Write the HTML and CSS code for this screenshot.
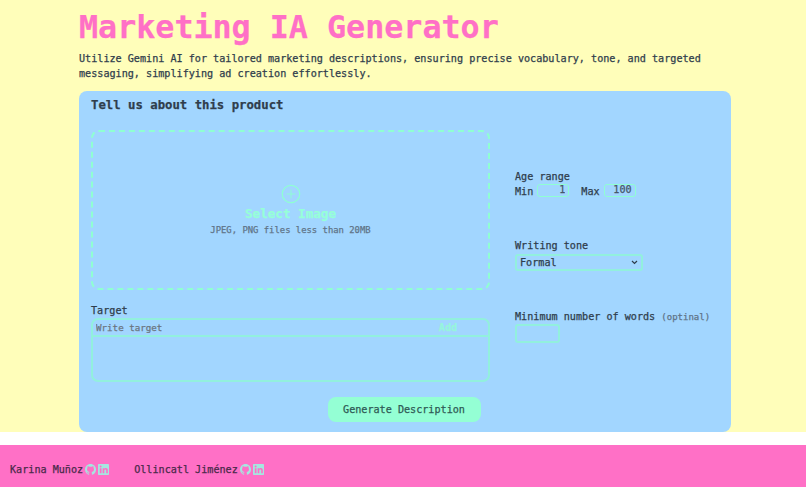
FILE: index.html

```html
<!DOCTYPE html>
<html lang="en">
<head>
  <meta charset="UTF-8" />
  <meta name="viewport" content="width=device-width, initial-scale=1.0"/>
  <title>Marketing IA Generator</title>
  <link rel="stylesheet" href="styles.css">
</head>
<body>

<main class="page">
  <h1 class="title">Marketing IA Generator</h1>
  <p class="intro">Utilize Gemini AI for tailored marketing descriptions, ensuring precise vocabulary, tone, and targeted messaging, simplifying ad creation effortlessly.</p>

  <form class="card">
    <h2 class="card-title">Tell us about this product</h2>

    <div class="columns">
      <div class="col-left">
        <div class="dropzone">
          <svg class="plus-icon" viewBox="0 0 20 20" width="20" height="20" fill="none" stroke="currentColor">
            <circle cx="10" cy="10" r="8.7" stroke-width="1.2"/>
            <path d="M10 5.5v9M5.5 10h9" stroke-width="0.9"/>
          </svg>
          <span class="drop-title">Select Image</span>
          <span class="drop-hint">JPEG, PNG files less than 20MB</span>
        </div>

        <div class="target">
          <label class="field-label" for="target">Target</label>
          <div class="target-box">
            <div class="target-row">
              <input class="target-input" type="text" id="target" placeholder="Write target" />
              <button class="add-btn" type="button">Add</button>
            </div>
            <div class="target-list"></div>
          </div>
        </div>
      </div>

      <div class="col-right">
        <div class="field age-field">
          <span class="field-label">Age range</span>
          <div class="age-row">
            <label for="ageMin">Min</label>
            <input class="age-input" type="text" id="ageMin" value="1" />
            <label class="max-label" for="ageMax">Max</label>
            <input class="age-input" type="text" id="ageMax" value="100" />
          </div>
        </div>

        <div class="field tone-field">
          <label class="field-label" for="tone">Writing tone</label>
          <select class="tone-select" id="tone">
            <option>Formal</option>
            <option>Casual</option>
          </select>
        </div>

        <div class="field words-field">
          <label class="field-label" for="words">Minimum number of words <span class="optional">(optinal)</span></label>
          <input class="words-input" type="text" id="words" />
        </div>
      </div>
    </div>

    <div class="actions">
      <button class="generate-btn" type="button">Generate Description</button>
    </div>
  </form>
</main>

<footer class="footer">
  <div class="person">
    <span class="person-name">Karina Muñoz</span>
    <svg class="icon" viewBox="0 0 16 16" width="11" height="11"><path fill="currentColor" d="M8 0C3.58 0 0 3.58 0 8c0 3.54 2.29 6.53 5.47 7.59.4.07.55-.17.55-.38 0-.19-.01-.82-.01-1.49-2.01.37-2.53-.49-2.69-.94-.09-.23-.48-.94-.82-1.13-.28-.15-.68-.52-.01-.53.63-.01 1.08.58 1.23.82.72 1.21 1.87.87 2.33.66.07-.52.28-.87.51-1.07-1.78-.2-3.64-.89-3.64-3.95 0-.87.31-1.59.82-2.15-.08-.2-.36-1.02.08-2.12 0 0 .67-.21 2.2.82.64-.18 1.32-.27 2-.27s1.36.09 2 .27c1.53-1.04 2.2-.82 2.2-.82.44 1.1.16 1.92.08 2.12.51.56.82 1.27.82 2.15 0 3.07-1.87 3.75-3.65 3.95.29.25.54.73.54 1.48 0 1.07-.01 1.93-.01 2.2 0 .21.15.46.55.38A8.01 8.01 0 0 0 16 8c0-4.42-3.58-8-8-8z"/></svg>
    <svg class="icon" viewBox="0 0 16 16" width="11" height="11"><path fill="currentColor" fill-rule="evenodd" d="M1 0h14a1 1 0 0 1 1 1v14a1 1 0 0 1-1 1H1a1 1 0 0 1-1-1V1a1 1 0 0 1 1-1zm1.6 6v7.6h2.5V6H2.600zm1.250-3.700a1.450 1.450 0 1 0 0 2.900 1.450 1.450 0 0 0 0-2.900zM6.800 6v7.600h2.400V9.800c0-1 .4-1.800 1.400-1.800s1.300.8 1.300 1.800v3.800h2.400V9.300C14.300 7 13.100 5.800 11.300 5.800c-1 0-1.700.5-2.100 1.100V6H6.800z"/></svg>
  </div>
  <div class="person">
    <span class="person-name">Ollincatl Jiménez</span>
    <svg class="icon" viewBox="0 0 16 16" width="11" height="11"><path fill="currentColor" d="M8 0C3.58 0 0 3.58 0 8c0 3.54 2.29 6.53 5.47 7.59.4.07.55-.17.55-.38 0-.19-.01-.82-.01-1.49-2.01.37-2.53-.49-2.69-.94-.09-.23-.48-.94-.82-1.13-.28-.15-.68-.52-.01-.53.63-.01 1.08.58 1.23.82.72 1.21 1.87.87 2.33.66.07-.52.28-.87.51-1.07-1.78-.2-3.64-.89-3.64-3.95 0-.87.31-1.59.82-2.15-.08-.2-.36-1.02.08-2.12 0 0 .67-.21 2.2.82.64-.18 1.32-.27 2-.27s1.36.09 2 .27c1.53-1.04 2.2-.82 2.2-.82.44 1.1.16 1.92.08 2.12.51.56.82 1.27.82 2.15 0 3.07-1.87 3.75-3.65 3.95.29.25.54.73.54 1.48 0 1.07-.01 1.93-.01 2.2 0 .21.15.46.55.38A8.01 8.01 0 0 0 16 8c0-4.42-3.58-8-8-8z"/></svg>
    <svg class="icon" viewBox="0 0 16 16" width="11" height="11"><path fill="currentColor" fill-rule="evenodd" d="M1 0h14a1 1 0 0 1 1 1v14a1 1 0 0 1-1 1H1a1 1 0 0 1-1-1V1a1 1 0 0 1 1-1zm1.6 6v7.6h2.5V6H2.600zm1.250-3.700a1.450 1.450 0 1 0 0 2.900 1.450 1.450 0 0 0 0-2.900zM6.800 6v7.600h2.400V9.800c0-1 .4-1.800 1.400-1.800s1.300.8 1.300 1.800v3.800h2.400V9.300C14.300 7 13.100 5.800 11.300 5.800c-1 0-1.700.5-2.100 1.100V6H6.800z"/></svg>
  </div>
</footer>

</body>
</html>
```

FILE: styles.css

```css
* {
  box-sizing: border-box;
}
body {
  margin: 0;
  font-family: "DejaVu Sans Mono", "Liberation Mono", monospace;
  font-size: 10.15px;
  color: #2f3d4c;
  background: #fff;
  -webkit-text-stroke: 0.25px currentColor;
}
.page {
  background: #fffeba;
  padding: 0 75px 0 79px;
  margin-bottom: 13px;
}
.title {
  margin: 0;
  padding-top: 8px;
  font-size: 31.7px;
  line-height: 38px;
  font-weight: 700;
  color: #ff70c6;
}
.intro {
  margin: 5px 0 0;
  line-height: 15px;
  padding-bottom: 10px;
}
.card {
  background: #a2d6ff;
  border-radius: 8px;
  padding: 6px 12px 10px;
  height: 341px;
  display: flex;
  flex-direction: column;
}
.card-title {
  margin: 0;
  font-size: 12.3px;
  line-height: 16px;
  font-weight: 700;
}
.columns {
  display: flex;
  gap: 25px;
  margin-top: 17px;
}
.col-left {
  width: 399px;
}
.dropzone {
  height: 160px;
  border: 2px dashed #8fffd2;
  border-radius: 8px;
  display: flex;
  flex-direction: column;
  align-items: center;
  padding-top: 52px;
}
.plus-icon {
  color: #8fffd2;
}
.drop-title {
  margin-top: 2px;
  font-size: 12.6px;
  line-height: 16px;
  font-weight: 700;
  color: #96ffd8;
}
.drop-hint {
  margin-top: 2px;
  font-size: 8.9px;
  line-height: 12px;
  color: #5f7488;
}
.target {
  margin-top: 14px;
}
.field-label {
  display: block;
  line-height: 14px;
}
.target-box {
  height: 64px;
  border: 2px solid #92f0dd;
  border-radius: 7px;
}
.target-row {
  display: flex;
  height: 17px;
  border-bottom: 2px solid #92f0dd;
}
.target-input {
  flex: 1;
  min-width: 0;
  border: none;
  outline: none;
  background: transparent;
  padding: 0 3px;
  font: inherit;
  font-size: 9.2px;
  color: #6b7580;
}
.target-input::placeholder {
  color: #6b7580;
  opacity: 1;
}
.add-btn {
  width: 60px;
  margin-right: 10px;
  padding: 0;
  border: none;
  background: transparent;
  font: inherit;
  font-weight: 700;
  color: #96f5dc;
}
.col-right {
  flex: 1;
  padding-top: 40px;
}
.age-row {
  display: flex;
  align-items: center;
  line-height: 14px;
  margin-top: -1px;
}
.age-row label {
  margin-top: 2px;
}
.age-input {
  width: 32px;
  height: 13px;
  margin-left: 4px;
  margin-top: -2px;
  padding: 0 3px 0 0;
  border: 1px solid #8fffd2;
  border-radius: 3px;
  background: transparent;
  text-align: right;
  font: inherit;
  color: #465769;
}
.age-row .max-label {
  margin-left: 12px;
}
.tone-field {
  margin-top: 40px;
}
.tone-select {
  display: block;
  width: 128px;
  height: 17px;
  margin-top: 1px;
  padding: 0 0 0 3px;
  border: 2px solid #92f0dd;
  border-radius: 3px;
  font: inherit;
  color: inherit;
  appearance: none;
  background: transparent url("data:image/svg+xml,%3Csvg xmlns='http://www.w3.org/2000/svg' width='7' height='5'%3E%3Cpath d='M1 1l2.500 2.500L6 1' fill='none' stroke='%232f3d4c' stroke-width='1.200'/%3E%3C/svg%3E") no-repeat right 3px center;
}
.words-field {
  margin-top: 39px;
}
.optional {
  font-size: 9px;
  color: #5f7488;
}
.words-input {
  display: block;
  width: 45px;
  height: 19px;
  border: 2px solid #92f0dd;
  border-radius: 3px;
  background: transparent;
}
.actions {
  margin-top: auto;
  display: flex;
  justify-content: center;
  padding-right: 2px;
}
.generate-btn {
  width: 153px;
  height: 25px;
  border: none;
  border-radius: 8px;
  background: #94ffd4;
  font: inherit;
  color: #2f5a55;
}
.footer {
  height: 42px;
  background: #ff70c6;
  display: flex;
  align-items: center;
  gap: 25px;
  padding: 7px 0 0 10px;
  color: #4a2a4a;
}
.person {
  display: flex;
  align-items: center;
  gap: 2px;
}
.icon {
  color: #a6e6e0;
}
```
